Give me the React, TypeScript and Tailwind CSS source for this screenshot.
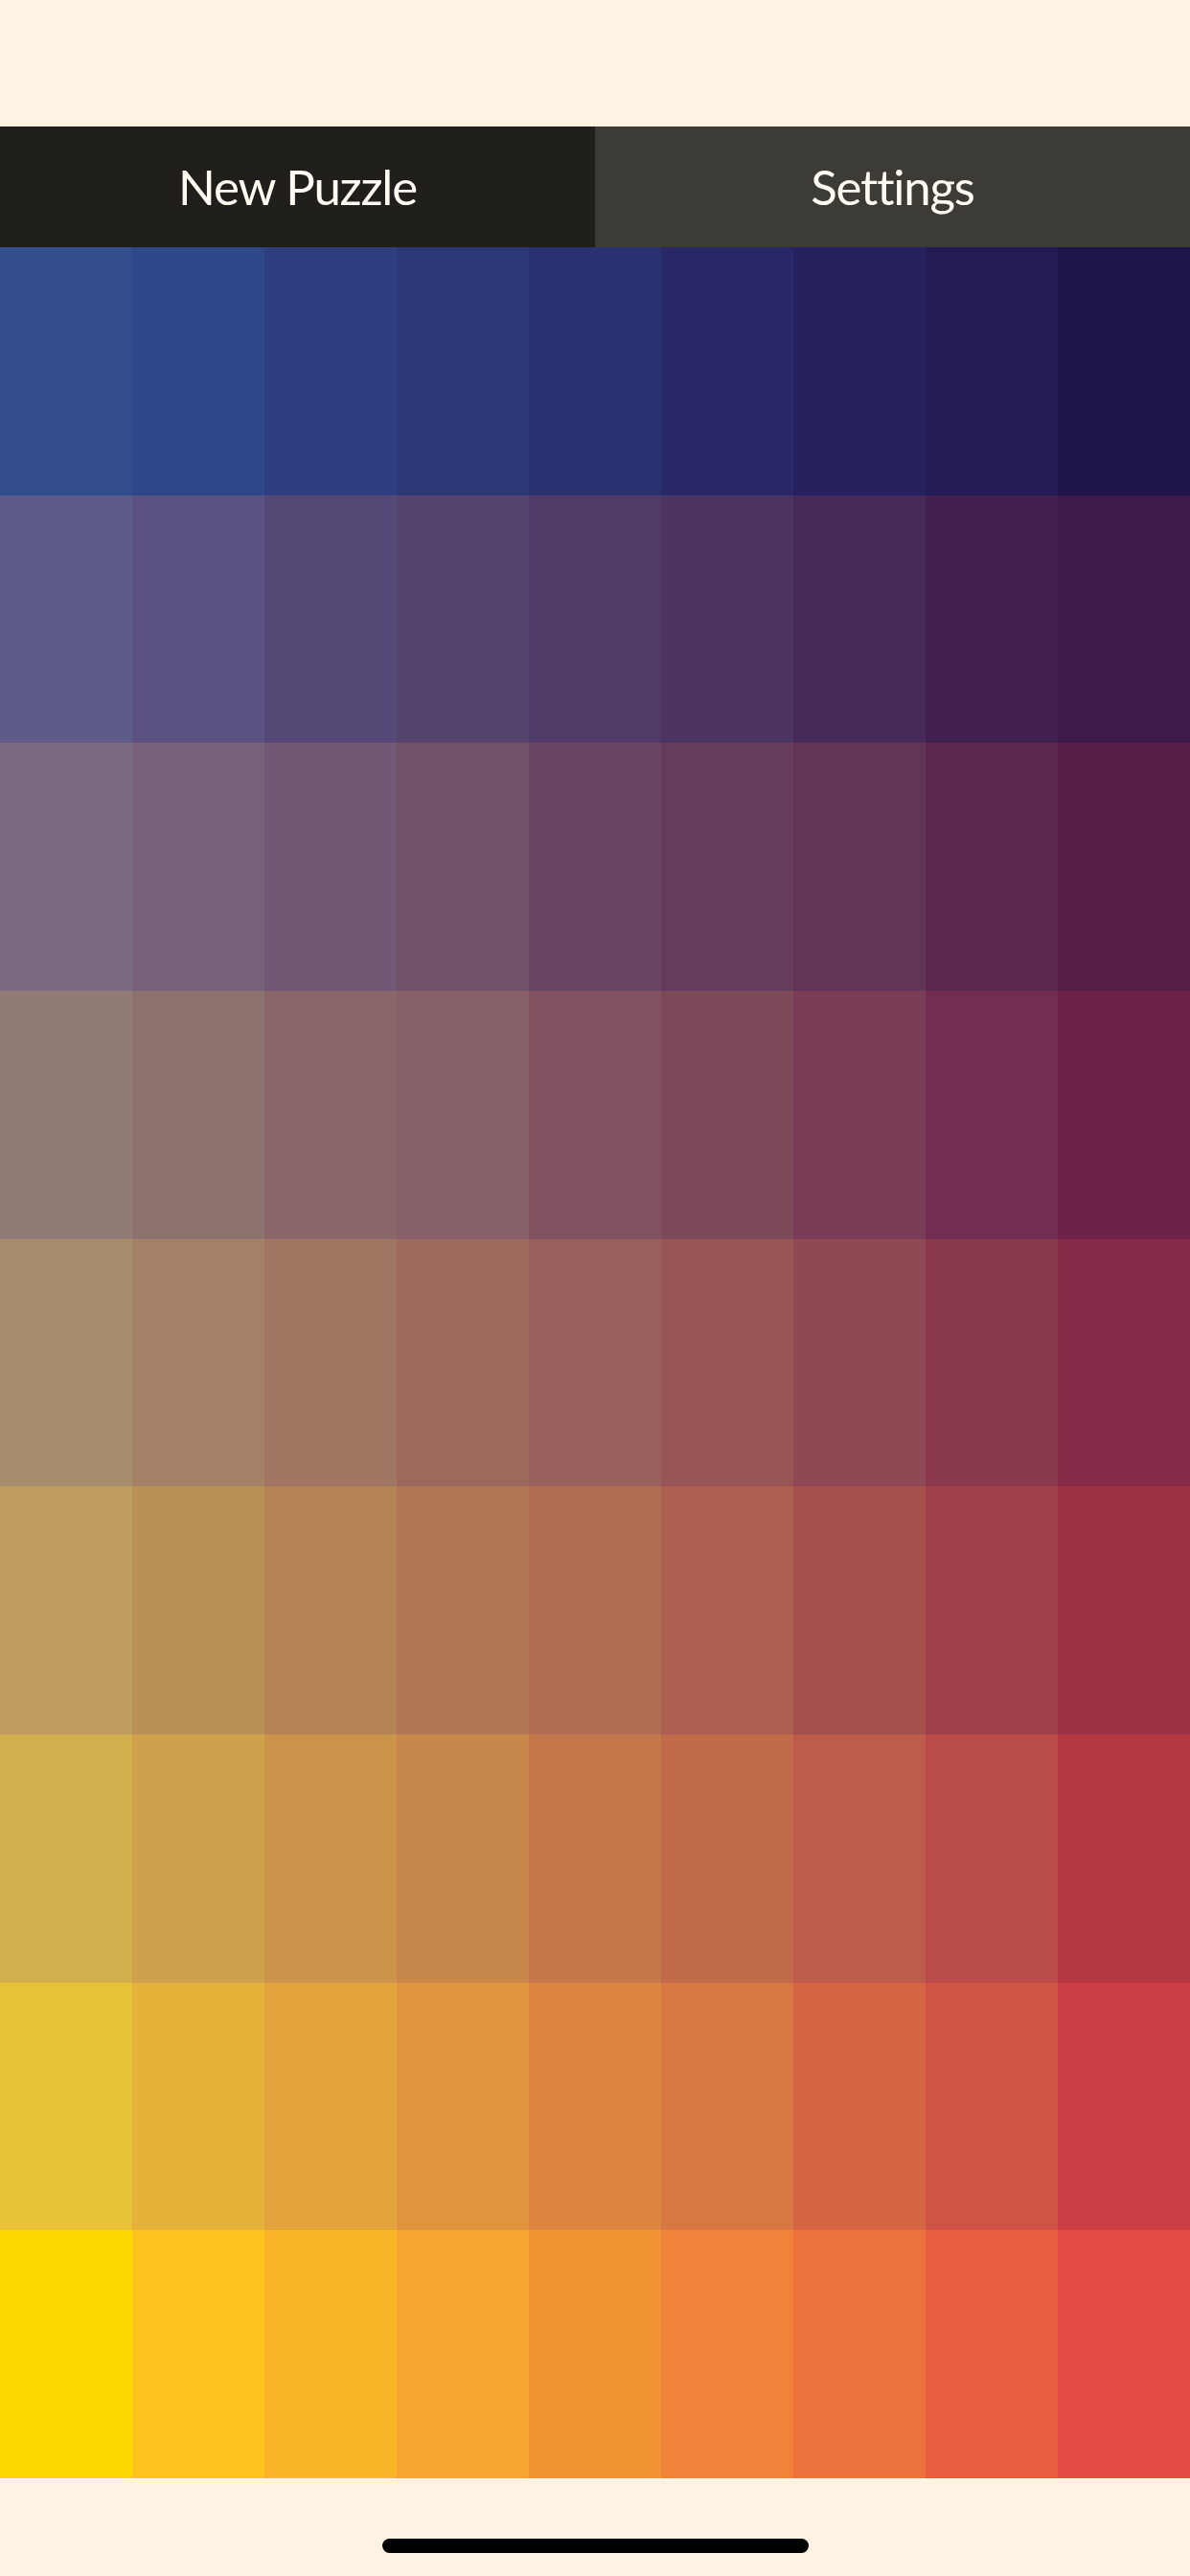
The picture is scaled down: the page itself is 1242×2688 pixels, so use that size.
import React from 'react';

// colours of the hue board, row by row (top to bottom)
const board: string[][] = [
  ['#334e8f', '#30468a', '#2e3e7e', '#2c3776', '#2a3070', '#282868', '#25215f', '#221b56', '#1f154b'],
  ['#5e5b88', '#5a5182', '#554877', '#54446e', '#503a68', '#4b3462', '#472a5a', '#422051', '#3d1a4a'],
  ['#7a6a80', '#776279', '#725874', '#6f5269', '#694762', '#653c5e', '#613458', '#5c2850', '#561e48'],
  ['#917b74', '#8c716e', '#88666a', '#866066', '#81525f', '#7c4959', '#7a3c57', '#722d50', '#6d2248'],
  ['#a88d6c', '#a58168', '#a17663', '#9c6a5d', '#9a605b', '#975556', '#8f4954', '#8b3a4e', '#852b47'],
  ['#be9c5e', '#ba9059', '#b68356', '#b27753', '#b06d52', '#ad6052', '#a6504e', '#a0414a', '#9b3245'],
  ['#d2af4d', '#cfa14c', '#cc944a', '#c8874b', '#c4774a', '#c26b4b', '#bd5c4a', '#b94b48', '#b43944'],
  ['#e8c338', '#e5b33a', '#e3a33c', '#e0943e', '#db8540', '#d77741', '#d66643', '#cf5444', '#cb3e43'],
  ['#fdd800', '#fcc41c', '#fab628', '#f6a630', '#f29434', '#f08339', '#ed723c', '#e85f3f', '#e34a42'],
];

export default function App() {
  return (
    <div
      className="w-[1242px] h-[2688px] bg-[#fef3e2] flex flex-col overflow-hidden"
      style={{ fontFamily: 'Lato, "Open Sans", sans-serif' }}
    >
      <div className="h-[132px] shrink-0" />

      <div className="h-[126px] shrink-0 flex">
        <button className="flex-1 bg-[#201f1b] text-[#fffaf2] text-[51px] tracking-[-1.2px] flex items-center justify-center">
          New Puzzle
        </button>
        <button className="flex-1 bg-[#3c3b36] text-[#fffaf2] text-[51px] tracking-[-1.2px] flex items-center justify-center">
          Settings
        </button>
      </div>

      <div className="h-[2328px] shrink-0 grid grid-cols-9 grid-rows-9">
        {board.map((row, r) =>
          row.map((color, c) => (
            <div key={`${r}-${c}`} style={{ backgroundColor: color }} />
          ))
        )}
      </div>

      <div className="flex-1 flex justify-center">
        <div className="mt-[63px] w-[445px] h-[15px] rounded-full bg-black" />
      </div>
    </div>
  );
}
